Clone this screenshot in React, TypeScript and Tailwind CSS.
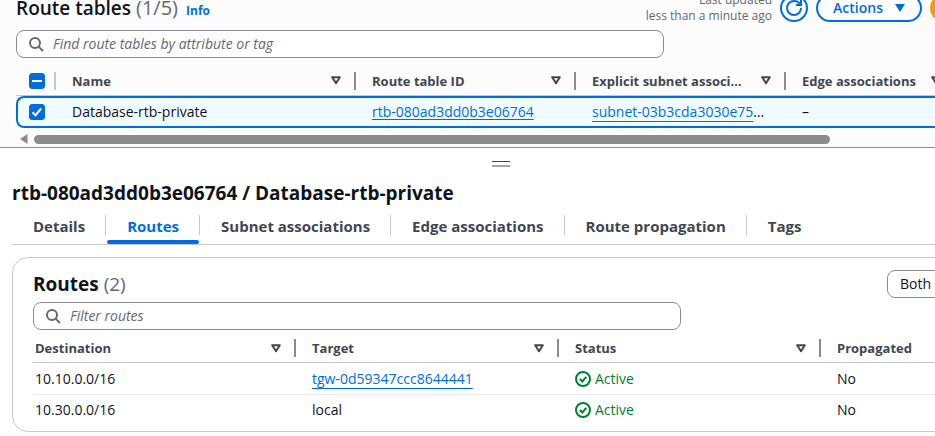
import { useEffect, useRef, useState } from "react";
import type { ReactNode } from "react";

function SortIcon() {
  return (
    <svg width="10" height="9" viewBox="0 0 10 9" aria-hidden="true">
      <path d="M1.2 1.2h7.6L5 7.2z" fill="none" stroke="#424650" strokeWidth="2" strokeLinejoin="round" />
    </svg>
  );
}

function SearchIcon() {
  return (
    <svg width="16" height="16" viewBox="0 0 16 16" fill="none" stroke="#656871" strokeWidth="2" aria-hidden="true">
      <circle cx="7" cy="7" r="5" />
      <path d="M10.6 10.6L15 15" />
    </svg>
  );
}

function RefreshIcon() {
  return (
    <svg width="16" height="16" viewBox="0 0 16 16" fill="none" stroke="currentColor" strokeWidth="2" aria-hidden="true">
      <path d="M15 8c0 3.9-3.1 7-7 7s-7-3.1-7-7 3.1-7 7-7c3 0 5.4 1.7 6.4 4" />
      <path d="M10 5h5V0" />
    </svg>
  );
}

function StatusIcon() {
  return (
    <svg width="16" height="16" viewBox="0 0 16 16" fill="none" stroke="currentColor" strokeWidth="2" aria-hidden="true">
      <circle cx="8" cy="8" r="7" />
      <path d="M4.8 8l2.5 2.5 4-4.7" />
    </svg>
  );
}

function SearchBox({ id, label, placeholder }: { id: string; label: string; placeholder: string }) {
  return (
    <div className="flex h-7 w-full max-w-[648px] items-center gap-[9px] rounded-lg border border-[#8c8c94] bg-white px-[11px]">
      <label htmlFor={id} aria-label={label}>
        <SearchIcon />
      </label>
      <input
        id={id}
        type="text"
        placeholder={placeholder}
        className="min-w-0 flex-1 bg-transparent text-sm leading-5 outline-none placeholder:text-[#656871] placeholder:italic"
      />
    </div>
  );
}

function HeaderCell({ children, first, top }: { children: ReactNode; first?: boolean; top: string }) {
  return (
    <th scope="col" className={"border-b border-[#c6c6cd] p-0 text-left text-[13px] font-bold text-[#424650] " + top}>
      <div
        className={
          "flex h-[18px] items-center justify-between gap-3 border-r-2 border-[#8c8c94] pr-[13px] " +
          (first ? "pl-[2px]" : "pl-4")
        }
      >
        <span className="truncate leading-5">{children}</span>
        <span className="shrink-0">
          <SortIcon />
        </span>
      </div>
    </th>
  );
}

function RowCheckbox({ label, partial }: { label: string; partial?: boolean }) {
  const [checked, setChecked] = useState(!partial);
  const ref = useRef<HTMLInputElement>(null);
  useEffect(() => {
    if (ref.current) ref.current.indeterminate = Boolean(partial);
  }, [partial]);
  return (
    <span className="grid size-4">
      <input
        ref={ref}
        type="checkbox"
        aria-label={label}
        checked={checked}
        onChange={() => setChecked(!checked)}
        className="peer col-start-1 row-start-1 size-4 appearance-none rounded-[3px] border border-[#8c8c94] bg-white checked:border-[#006ce0] checked:bg-[#006ce0] indeterminate:border-[#006ce0] indeterminate:bg-[#006ce0]"
      />
      <svg
        viewBox="0 0 16 16"
        className="pointer-events-none invisible col-start-1 row-start-1 size-4 peer-checked:visible peer-indeterminate:visible"
        fill="none"
        stroke="white"
        strokeWidth="2"
        aria-hidden="true"
      >
        {partial ? <path d="M3 8h10" /> : <path d="M3.5 8.2l3 3L12.2 4.5" />}
      </svg>
    </span>
  );
}

const cell = "border-y-2 border-[#006ce0] bg-[#f0fbff] p-0 pl-4";

function RouteTables() {
  return (
    <section className="overflow-hidden border-b border-[#8c8c94] bg-[#fcfcfc] pl-4">
      <div className="-mt-[6px] flex h-7 w-[calc(100%+137px)] items-center">
        <h1 className="flex flex-1 items-baseline gap-2 text-[19px] leading-6 font-semibold">
          <span>
            Route tables <span className="text-xl leading-6 font-normal text-[#656871]">(1/5)</span>
          </span>
          <a href="#info" className="text-xs font-bold text-[#006ce0]">
            Info
          </a>
        </h1>
        <p className="mr-2 flex flex-col text-right text-xs leading-4 text-[#656871]">
          <span>Last updated</span>
          <span>less than a minute ago</span>
        </p>
        <button
          type="button"
          aria-label="Refresh"
          className="mr-2 grid size-7 place-items-center rounded-full border-2 border-[#006ce0] bg-white text-[#006ce0]"
        >
          <RefreshIcon />
        </button>
        <button
          type="button"
          className="mr-2 flex h-7 w-[106px] items-center justify-center gap-3 rounded-full border-2 border-[#006ce0] bg-white text-sm font-semibold text-[#006ce0]"
        >
          Actions
          <svg width="10" height="8" viewBox="0 0 10 8" aria-hidden="true">
            <path d="M0 0h10L5 8z" fill="currentColor" />
          </svg>
        </button>
        <button
          type="button"
          className="h-7 w-[142px] shrink-0 rounded-full bg-[#ff9900] text-sm font-semibold whitespace-nowrap"
        >
          Create route table
        </button>
      </div>
      <div className="mt-2 pr-4">
        <SearchBox id="find" label="Find route tables" placeholder="Find route tables by attribute or tag" />
      </div>
      <table className="w-[940px] table-fixed border-separate border-spacing-0 text-sm leading-5">
        <colgroup>
          <col className="w-10" />
          <col className="w-[300px]" />
          <col className="w-[220px]" />
          <col className="w-[210px]" />
          <col className="w-[170px]" />
        </colgroup>
        <thead>
          <tr className="h-[38px]">
            <th scope="col" className="border-b border-[#c6c6cd] p-0 pt-2">
              <div className="flex h-[18px] items-center border-r-2 border-[#c6c6cd] pl-[13px]">
                <RowCheckbox label="Select all" partial />
              </div>
            </th>
            {["Name", "Route table ID", "Explicit subnet associations", "Edge associations"].map((name) => (
              <HeaderCell key={name} top="pt-2">
                {name}
              </HeaderCell>
            ))}
          </tr>
        </thead>
        <tbody>
          <tr className="h-8">
            <td className="rounded-l-lg border-y-2 border-l-2 border-[#006ce0] bg-[#f0fbff] p-0 pl-[11px]">
              <RowCheckbox label="Select Database-rtb-private" />
            </td>
            <td className={cell}>Database-rtb-private</td>
            <td className={cell}>
              <a href="#rtb" className="text-[#006ce0] underline underline-offset-2">
                rtb-080ad3dd0b3e06764
              </a>
            </td>
            <td className={cell}>
              <div className="mr-4 truncate">
                <a href="#subnet" className="text-[#006ce0] underline underline-offset-4">
                  subnet-03b3cda3030e75a1c
                </a>
              </div>
            </td>
            <td className={cell}>–</td>
          </tr>
        </tbody>
      </table>
      <div className="flex h-[19px] items-center gap-[6px] pt-[3px] pl-1">
        <svg width="8" height="10" viewBox="0 0 8 10" aria-hidden="true">
          <path d="M7.5 0v10L0 5z" fill="#8c8c8c" />
        </svg>
        <div className="h-[9px] w-[796px] rounded-full bg-[#8c8c8c]" />
      </div>
    </section>
  );
}

const tabs = ["Details", "Routes", "Subnet associations", "Edge associations", "Route propagation", "Tags"];

const routes = [
  { destination: "10.10.0.0/16", target: "tgw-0d59347ccc8644441", linked: true },
  { destination: "10.30.0.0/16", target: "local", linked: false },
];

function Details() {
  const [active, setActive] = useState("Routes");
  return (
    <section className="overflow-hidden pb-1 pl-3">
      <div className="flex h-8 items-center justify-center pl-[54px]">
        <button
          type="button"
          aria-label="Resize panel"
          className="h-[6px] w-[18px] border-t border-b-2 border-t-[#424650] border-b-[#a4a4ad]"
        />
      </div>
      <h2 className="text-[19px] leading-[26px] font-bold">rtb-080ad3dd0b3e06764 / Database-rtb-private</h2>
      <div role="tablist" className="flex h-[39px] border-b border-[#c6c6cd] pl-px">
        {tabs.map((tab, i) => (
          <div key={tab} className="flex">
            <button
              type="button"
              role="tab"
              aria-selected={tab === active}
              onClick={() => setActive(tab)}
              className={
                "flex flex-col justify-between pt-2 text-[15px] leading-6 font-bold whitespace-nowrap " +
                (tab === active ? "text-[#006ce0]" : "text-[#424650]")
              }
            >
              <span className="px-5">{tab}</span>
              <span className={"h-1 w-full rounded-sm " + (tab === active ? "bg-[#006ce0]" : "")} />
            </button>
            {i < tabs.length - 1 && <span className="mt-[9px] mr-px h-5 w-px bg-[#c6c6cd]" />}
          </div>
        ))}
      </div>
      <div className="mt-3 w-[calc(100%+145px)] rounded-2xl border border-[#c6c6cd] px-5 pt-3 pb-[6px]">
        <div className="flex h-7 items-center justify-between">
          <h3 className="text-[19px] leading-[26px] font-bold">
            Routes <span className="font-normal text-[#656871]">(2)</span>
          </h3>
          <button type="button" className="flex h-7 w-[172px] items-center rounded-lg border border-[#8c8c94] px-3 text-sm">
            Both
          </button>
        </div>
        <div className="mt-1">
          <SearchBox id="filter" label="Filter routes" placeholder="Filter routes" />
        </div>
        <table className="w-full table-fixed border-separate border-spacing-0 text-sm leading-5">
          <colgroup>
            <col className="w-[263px]" />
            <col className="w-[263px]" />
            <col className="w-[262px]" />
            <col />
          </colgroup>
          <thead>
            <tr className="h-[33px]">
              <HeaderCell first top="pt-1">
                Destination
              </HeaderCell>
              <HeaderCell top="pt-1">Target</HeaderCell>
              <HeaderCell top="pt-1">Status</HeaderCell>
              <HeaderCell top="pt-1">Propagated</HeaderCell>
            </tr>
          </thead>
          <tbody>
            {routes.map((route, i) => {
              const line = i === 0 ? "border-b border-[#ebebf0] " : "";
              return (
                <tr key={route.destination} className={i === 0 ? "h-8" : "h-[30px]"}>
                  <td className={line + "p-0 pl-[2px]"}>{route.destination}</td>
                  <td className={line + "p-0 pl-4"}>
                    {route.linked ? (
                      <a href="#target" className="text-[#006ce0] underline underline-offset-4">
                        {route.target}
                      </a>
                    ) : (
                      route.target
                    )}
                  </td>
                  <td className={line + "p-0 pl-4 text-[#00802f]"}>
                    <span className="flex items-center gap-1">
                      <StatusIcon />
                      Active
                    </span>
                  </td>
                  <td className={line + "p-0 pl-4"}>No</td>
                </tr>
              );
            })}
          </tbody>
        </table>
      </div>
    </section>
  );
}

export default function App() {
  return (
    <main className="min-h-screen overflow-hidden bg-white font-['Open_Sans','Noto_Sans',sans-serif] text-[#0f141a]">
      <RouteTables />
      <Details />
    </main>
  );
}
